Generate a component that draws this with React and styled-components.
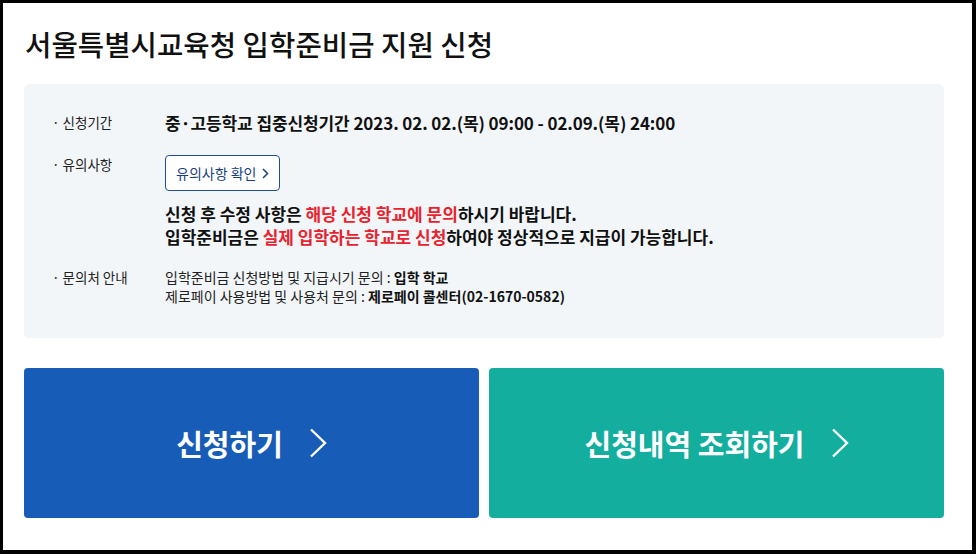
import React from "react";
import styled, { createGlobalStyle } from "styled-components";

const GlobalStyle = createGlobalStyle`
  html, body {
    margin: 0;
    padding: 0;
    background: #000;
  }
  body {
    font-family: "Noto Sans CJK KR", "Noto Sans", sans-serif;
    color: #111;
  }
  * {
    box-sizing: border-box;
  }
`;

const Page = styled.div`
  margin: 3px 4px 4px 3px;
  height: 547px;
  background: #fff;
  padding: 23px 28px 0 21px;
  display: flex;
  flex-direction: column;
`;

const Title = styled.h1`
  margin: 0 0 22px 1px;
  font-size: 28.7px;
  line-height: 36px;
  font-weight: 500;
  letter-spacing: 0;
  color: #111;
`;

const InfoBox = styled.div`
  background: #f2f6f8;
  border-radius: 5px;
  padding: 27px 28px 32px 28px;
  display: flex;
  flex-direction: column;
  gap: 20px;
`;

const Row = styled.div`
  display: flex;
  align-items: flex-start;
`;

const Label = styled.div`
  width: 113px;
  flex-shrink: 0;
  font-size: 13.5px;
  line-height: 19px;
  color: #222;
  padding-top: ${(p) => p.$offset || 0}px;
  letter-spacing: 0;

  &::before {
    content: "·";
    margin-right: 3px;
  }
`;

const Value = styled.div`
  display: flex;
  flex-direction: column;
  align-items: flex-start;
`;

const Period = styled.div`
  font-size: 17px;
  line-height: 24px;
  font-weight: 700;
  color: #111;
  letter-spacing: -0.1px;
`;

const NoticeButton = styled.button`
  display: flex;
  align-items: center;
  gap: 6px;
  height: 36px;
  padding: 0 10px;
  background: #fff;
  border: 1px solid #1d4f9c;
  border-radius: 4px;
  font-family: inherit;
  font-size: 14px;
  color: #1a3f80;
  letter-spacing: 0;
  cursor: pointer;
`;

const Notice = styled.p`
  margin: 11px 0 0 0;
  font-size: 17px;
  line-height: 23px;
  font-weight: 700;
  color: #111;
  letter-spacing: 0;
`;

const Red = styled.span`
  color: #e8232f;
`;

const Contact = styled.p`
  margin: 0;
  font-size: 14px;
  line-height: 19px;
  color: #222;
  letter-spacing: 0;

  b {
    font-weight: 700;
    color: #111;
  }
`;

const Actions = styled.div`
  margin-top: 30px;
  display: grid;
  grid-template-columns: 1fr 1fr;
  gap: 10px;
`;

const ActionButton = styled.button`
  height: 150px;
  border: none;
  border-radius: 4px;
  background: ${(p) => p.$bg};
  color: #fff;
  font-family: inherit;
  font-size: 29px;
  font-weight: 700;
  letter-spacing: 0;
  display: flex;
  align-items: center;
  justify-content: center;
  gap: 26px;
  cursor: pointer;
`;

const SmallChevron = () => (
  <svg width="7" height="11" viewBox="0 0 7 11" fill="none">
    <path d="M1 1l4.5 4.5L1 10" stroke="#1a3f80" strokeWidth="1.5" />
  </svg>
);

const BigChevron = () => (
  <svg width="18" height="30" viewBox="0 0 18 30" fill="none">
    <path d="M2 1.5L16 15L2 28.5" stroke="#fff" strokeWidth="2.4" />
  </svg>
);

export default function App() {
  return (
    <>
      <GlobalStyle />
      <Page>
        <Title>서울특별시교육청 입학준비금 지원 신청</Title>
        <InfoBox>
          <Row>
            <Label $offset={2}>신청기간</Label>
            <Value>
              <Period>
                중·고등학교 집중신청기간 2023. 02. 02.(목) 09:00 - 02.09.(목) 24:00
              </Period>
            </Value>
          </Row>
          <Row>
            <Label $offset={-2}>유의사항</Label>
            <Value>
              <NoticeButton>
                유의사항 확인 <SmallChevron />
              </NoticeButton>
              <Notice>
                신청 후 수정 사항은 <Red>해당 신청 학교에 문의</Red>하시기
                바랍니다.
                <br />
                입학준비금은 <Red>실제 입학하는 학교로 신청</Red>하여야
                정상적으로 지급이 가능합니다.
              </Notice>
            </Value>
          </Row>
          <Row>
            <Label>문의처 안내</Label>
            <Value>
              <Contact>
                입학준비금 신청방법 및 지급시기 문의 : <b>입학 학교</b>
                <br />
                제로페이 사용방법 및 사용처 문의 :{" "}
                <b>제로페이 콜센터(02-1670-0582)</b>
              </Contact>
            </Value>
          </Row>
        </InfoBox>
        <Actions>
          <ActionButton $bg="#175cb6">
            신청하기 <BigChevron />
          </ActionButton>
          <ActionButton $bg="#14ae9f">
            신청내역 조회하기 <BigChevron />
          </ActionButton>
        </Actions>
      </Page>
    </>
  );
}
